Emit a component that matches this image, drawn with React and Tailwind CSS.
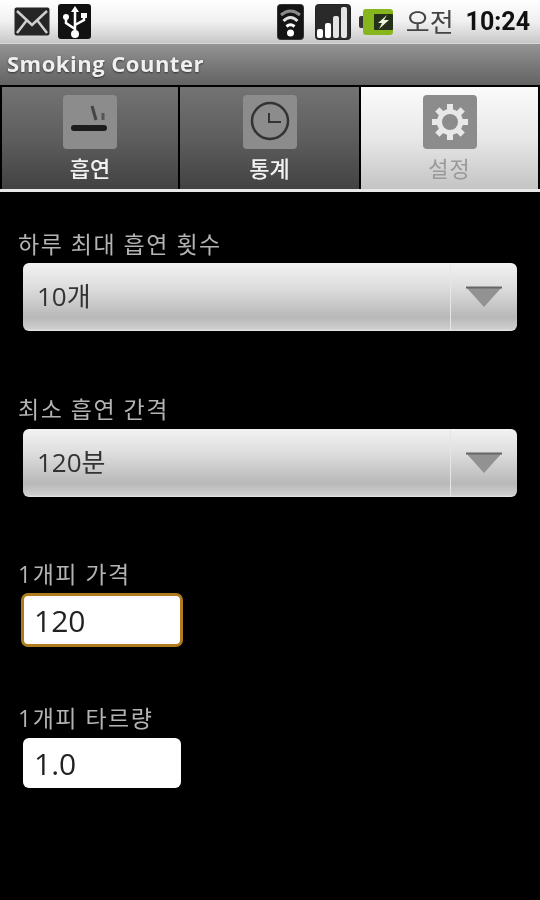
import React from 'react';

const MailIcon = () => (
  <svg width="36" height="30" viewBox="0 0 36 30">
    <rect x="0.5" y="0.5" width="35" height="28" rx="2" fill="#262626" />
    <path d="M3 4 L18 18 L33 4 M3 26 L13 13 M33 26 L23 13" stroke="#cfcfcf" strokeWidth="2.5" fill="none" />
  </svg>
);

const UsbIcon = () => (
  <svg width="34" height="36" viewBox="0 0 34 36">
    <rect width="33" height="35" rx="3" fill="#111" />
    <path d="M17 5 L17 30 M17 25 L8 19 L8 14 M17 21 L26 16 L26 12" stroke="#fff" strokeWidth="2.5" fill="none" />
    <path d="M17 2 L21 8 L13 8 Z" fill="#fff" />
    <circle cx="17" cy="30" r="4" fill="#fff" />
    <circle cx="8" cy="13" r="3" fill="#fff" />
    <rect x="23" y="9" width="6" height="5" fill="#fff" />
  </svg>
);

const WifiIcon = () => (
  <svg width="27" height="36" viewBox="0 0 27 36">
    <rect x="0.5" y="0.5" width="26" height="35" rx="3" fill="#141414" stroke="#333" />
    <path d="M4 11 Q13.5 3 23 11" stroke="#8a8a8a" strokeWidth="3" fill="none" />
    <path d="M6.5 17 Q13.5 10 20.5 17" stroke="#e0e0e0" strokeWidth="3" fill="none" />
    <path d="M9.5 22.5 Q13.5 19 17.5 22.5" stroke="#fff" strokeWidth="3" fill="none" />
    <circle cx="13.5" cy="29" r="3.5" fill="#fff" />
  </svg>
);

const SignalIcon = () => (
  <svg width="36" height="36" viewBox="0 0 36 36">
    <rect x="0.5" y="0.5" width="35" height="35" rx="3" fill="#2a2a2a" stroke="#222" />
    <rect x="2" y="25" width="6" height="9" rx="2" fill="#fff" />
    <rect x="10" y="19" width="6" height="15" rx="2" fill="#fff" />
    <rect x="18" y="12" width="6" height="22" rx="2" fill="#e4e4e4" />
    <rect x="26" y="3" width="6" height="31" rx="2" fill="#e4e4e4" />
  </svg>
);

const BatteryIcon = () => (
  <svg width="35" height="28" viewBox="0 0 35 28">
    <rect x="0" y="8" width="6" height="12" rx="2" fill="#333" />
    <rect x="4" y="1" width="30" height="26" rx="3" fill="#86b51d" />
    <rect x="15" y="6" width="19" height="16" rx="1" fill="#24301a" />
    <path d="M28 7 L19 15 L23 15 L20 21 L30 12 L25 12 Z" fill="#eef4dc" />
  </svg>
);

const SmokeIcon = () => (
  <svg width="54" height="54" viewBox="0 0 54 54">
    <rect width="54" height="54" rx="4" fill="#8c8c8c" />
    <rect x="8" y="30" width="36" height="6" rx="3" fill="#1c1c1c" />
    <path d="M29 11 L33 25" stroke="#444" strokeWidth="3" />
    <path d="M40 18 L40 25" stroke="#555" strokeWidth="3" />
  </svg>
);

const ClockIcon = () => (
  <svg width="54" height="54" viewBox="0 0 54 54">
    <rect width="54" height="54" rx="4" fill="#8c8c8c" />
    <circle cx="27" cy="26" r="18" fill="none" stroke="#333" strokeWidth="2.5" />
    <path d="M26 18 L26 27 L38 27" stroke="#333" strokeWidth="2" fill="none" />
  </svg>
);

const GearIcon = () => (
  <svg width="54" height="54" viewBox="0 0 54 54">
    <rect width="54" height="54" rx="4" fill="#8c8c8c" />
    <g stroke="#e8e8e8" strokeWidth="6">
      <path d="M27 9 L27 45" />
      <path d="M9 27 L45 27" />
      <path d="M14.3 14.3 L39.7 39.7" />
      <path d="M39.7 14.3 L14.3 39.7" />
    </g>
    <circle cx="27" cy="27" r="13" fill="#e8e8e8" />
    <circle cx="27" cy="27" r="8" fill="#8c8c8c" />
  </svg>
);

const Tab = ({ icon, label, active, className }) => (
  <div
    className={`flex flex-col items-center pt-[8px] ${className} ${
      active
        ? 'bg-gradient-to-b from-[#fbfbfb] via-[#e8e8e8] to-[#c4c4c4]'
        : 'bg-gradient-to-b from-[#737373] via-[#5e5e5e] to-[#424242]'
    }`}
  >
    {icon}
    <span
      className={
        active
          ? 'mt-[4px] text-[22px] leading-[30px] tracking-[1px] text-[#9a9a9a]'
          : 'mt-[4px] text-[22px] leading-[30px] font-medium text-[#f2f2f2]'
      }
    >
      {label}
    </span>
  </div>
);

const Select = ({ value }) => (
  <div className="mx-[23px] h-[68px] flex rounded-[6px] bg-[linear-gradient(to_bottom,#f2f2f2_0%,#dedede_35%,#b8b8b8_80%,#cfcfcf_97%,#e8e8e8_100%)]">
    <div className="flex-1 pl-[14px] pb-[2px] flex items-center text-[26px] text-[#333]">{value}</div>
    <div className="w-[67px] flex items-center justify-center border-l border-[#e6e6e6]">
      <svg width="38" height="22" viewBox="0 0 38 22">
        <path d="M1 1 L37 1 L19 21 Z" fill="#929292" />
        <path d="M1 1.5 L37 1.5" stroke="#666" strokeWidth="2" />
      </svg>
    </div>
  </div>
);

const Label = ({ children, className }) => (
  <div className={`pl-[18px] text-[23px] leading-[30px] text-[#b4b4b4] tracking-[1.5px] ${className}`}>{children}</div>
);

export default function App() {
  return (
    <div className="w-[540px] h-[900px] bg-black overflow-hidden blur-[0.6px] font-['Open_Sans','Noto_Sans_CJK_KR',sans-serif]">
      {/* status bar */}
      <div className="h-[43px] flex items-center px-[14px] bg-gradient-to-b from-[#ffffff] via-[#f0f0f0] to-[#c8c8c8]">
        <MailIcon />
        <div className="ml-[8px]"><UsbIcon /></div>
        <div className="ml-auto flex items-center -mr-[4px]">
          <WifiIcon />
          <div className="ml-[11px]"><SignalIcon /></div>
          <div className="ml-[8px]"><BatteryIcon /></div>
          <span className="ml-[12px] text-[26px] leading-[32px] text-[#444]">오전</span>
          <span className="ml-[12px] text-[25px] leading-[32px] font-bold text-[#111] font-['Roboto',sans-serif]">10:24</span>
        </div>
      </div>
      {/* title bar */}
      <div className="h-[42px] flex items-center px-[7px] pb-[2px] bg-gradient-to-b from-[#959595] via-[#7a7a7a] to-[#636363] border-t border-[#d8d8d8]">
        <span className="text-[22px] font-bold text-[#f0f0f0] tracking-[0.5px] [text-shadow:0_1px_2px_#333]">Smoking Counter</span>
      </div>
      {/* tabs */}
      <div className="h-[107px] flex gap-[2px] px-[2px] pt-[2px] bg-black border-b-[3px] border-[#e8e8e8]">
        <Tab className="w-[176px]" icon={<SmokeIcon />} label="흡연" />
        <Tab className="w-[179px]" icon={<ClockIcon />} label="통계" />
        <Tab className="flex-1" icon={<GearIcon />} label="설정" active />
      </div>
      {/* settings */}
      <Label className="mt-[37px] mb-[4px]">하루 최대 흡연 횟수</Label>
      <Select value="10개" />
      <Label className="mt-[63px] mb-[5px]">최소 흡연 간격</Label>
      <Select value="120분" />
      <Label className="mt-[62px] mb-[4px]">1개피 가격</Label>
      <div className="ml-[21px] w-[162px] h-[54px] rounded-[7px] bg-white border-[3px] border-[#b07a1e] flex items-center pl-[10px] text-[30px] text-[#222]">120</div>
      <Label className="mt-[56px] mb-[5px]">1개피 타르량</Label>
      <div className="ml-[23px] w-[158px] h-[50px] rounded-[6px] bg-white flex items-center pl-[11px] text-[30px] text-[#222]">1.0</div>
    </div>
  );
}
